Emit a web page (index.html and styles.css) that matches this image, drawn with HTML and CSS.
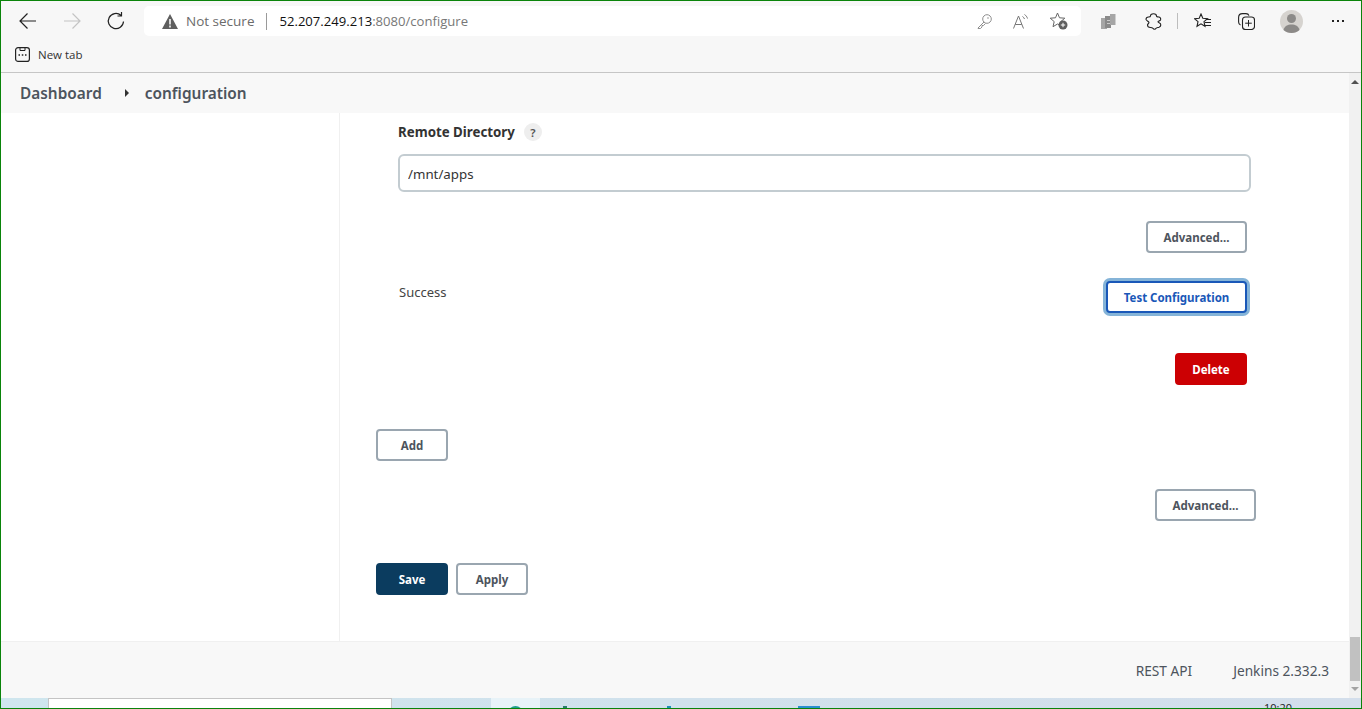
FILE: index.html
```html
<!DOCTYPE html>
<html lang="en">
<head>
    <meta charset="UTF-8">
    <title>Jenkins configuration</title>
    <link rel="stylesheet" href="styles.css">
</head>
<body>
<div class="screen">
    <div class="toolbar">
        <button class="nav-btn" type="button" aria-label="Back">
            <svg width="20" height="20" viewBox="0 0 20 20"><path d="M18 10H2M9.5 2.5L2 10l7.5 7.5" fill="none" stroke="#222" stroke-width="1.2"/></svg>
        </button>
        <button class="nav-btn" type="button" aria-label="Forward">
            <svg width="20" height="20" viewBox="0 0 20 20"><path d="M2 10h16M10.5 2.5L18 10l-7.5 7.5" fill="none" stroke="#c4c4c4" stroke-width="1.2"/></svg>
        </button>
        <button class="nav-btn" type="button" aria-label="Refresh">
            <svg width="20" height="20" viewBox="0 0 20 20"><path d="M17.5 10.5a7.6 7.6 0 1 1-2.6-6.2M15.5 1v4h-4" fill="none" stroke="#222" stroke-width="1.2"/></svg>
        </button>
        <div class="address">
            <svg width="16" height="15" viewBox="0 0 16 15"><path d="M8 0l8 15H0z" fill="#5f5f5f"/><path d="M7.2 5h1.6v5.5H7.2zM7.2 11.5h1.6v2H7.2z" fill="#f8f8f8"/></svg>
            <span class="not-secure">Not secure</span>
            <span class="address-sep"></span>
            <span class="url"><b>52.207.249.213</b>:8080/configure</span>
            <div class="address-icons">
                <svg width="15" height="15" viewBox="0 0 15 15"><circle cx="10" cy="5" r="4.3" fill="none" stroke="#8f8f8f"/><circle cx="11" cy="4" r=".8" fill="#8f8f8f"/><path d="M7 8L1 14v.5h2.5L5 13v-1.5h1.500L8.500 9.500" fill="none" stroke="#8f8f8f"/></svg>
                <svg width="16" height="15" viewBox="0 0 16 15"><path d="M.5 14.5L5.5 2l5 12.500M2.200 10.500h6.600" fill="none" stroke="#777"/><path d="M9.500 2.500c1 .6 1.700 1.500 2 2.500M11.500.5c1.400.9 2.500 2.300 3 4" fill="none" stroke="#777"/></svg>
                <svg width="18" height="18" viewBox="0 0 18 18"><path d="M7.500 1l2 4.800 5.300.4-4 3.400 1.200 5.100-4.500-2.700-4.500 2.700 1.200-5.100-4-3.400 5.300-.4z" fill="none" stroke="#666"/><circle cx="13" cy="13" r="4.500" fill="#5f5f5f"/><path d="M10.800 13h4.400M13 10.800v4.400" stroke="#fff"/></svg>
            </div>
        </div>
        <div class="tool-icons">
            <svg class="ti-copies" width="15" height="15" viewBox="0 0 15 15"><path d="M0 4h6v11H0z" fill="#a6a6a6"/><path d="M4 2h6v12H4z" fill="#8a8a8a"/><path d="M9 0h5.500v11H9z" fill="#a6a6a6"/><path d="M6 6h3v1H6zM6 9h3v1H6z" fill="#ccc"/></svg>
            <svg class="ti-puzzle" width="17" height="17" viewBox="0 0 17 17"><path d="M5.500 3c0-3 6-3 6 0 0 .5 1 1 2.500 1 1.500.5 2 1.500 1.500 3-.5 1-2.500 1-2.500 1.800s2 1 2.500 2c.5 1.500 0 3-1.500 3.500-2 .5-2.500.5-3 1-.5 1.200-2.500 1.200-3 0-.5-.5-1-.8-2.500-.8-2 0-3-1-3-2.500 0-1 1.500-1.500 1.500-2.500S1.200 7.500 1 6.500C1 5 2 4 3.500 4c1 0 2-.5 2-1z" fill="none" stroke="#222" stroke-width="1.100"/></svg>
            <span class="tool-sep"></span>
            <svg class="ti-favs" width="17" height="16" viewBox="0 0 17 16"><path d="M7 1l1.800 4.300 4.700.4-3.500 3 1 4.600L7 10.900l-4 2.400 1-4.600-3.500-3 4.700-.4z" fill="#f7f7f7" stroke="#222" stroke-width="1.100"/><path d="M12 6.500h5M11 9.500h6M11 12.500h6" stroke="#222"/></svg>
            <svg class="ti-coll" width="17" height="17" viewBox="0 0 17 17"><path d="M2.500 12C1.200 11.500.6 10.500.6 9V4.500C.6 2 2 .6 4.500.6h3.500c1.500 0 2.500.6 3 2" fill="none" stroke="#222" stroke-width="1.100"/><rect x="4.500" y="4" width="12" height="12.500" rx="3" fill="none" stroke="#222" stroke-width="1.100"/><path d="M10.500 7v6.500M7.200 10.200h6.600" stroke="#222"/></svg>
            <svg class="ti-avatar" width="23" height="23" viewBox="0 0 23 23"><circle cx="11.500" cy="11.500" r="11.500" fill="#d6d3cf"/><circle cx="11.500" cy="8.500" r="4.500" fill="#8c8a88"/><path d="M3.500 20c1-4 4-5.500 8-5.500s7 1.500 8 5.500c-2 2-5 3-8 3s-6-1-8-3z" fill="#8c8a88"/></svg>
            <span class="ti-more"><i></i><i></i><i></i></span>
        </div>
    </div>

    <div class="favbar">
        <svg width="15" height="15" viewBox="0 0 15 15"><rect x=".6" y=".6" width="13.8" height="13.8" rx="2.5" fill="none" stroke="#222" stroke-width="1.2"/><path d="M5 .6v2.900h5V.6" fill="none" stroke="#222"/><path d="M3.500 8h1.500M6.800 8h1.500M10 8h1.500" stroke="#222" stroke-width="1.5"/></svg>
        <span>New tab</span>
    </div>

    <div class="page-wrap">
        <div class="page">
            <div class="breadcrumb">
                <a class="crumb">Dashboard</a>
                <span class="crumb-arrow"></span>
                <a class="crumb">configuration</a>
            </div>

            <div class="columns">
                <div class="side-panel"></div>
                <div class="main-panel">
                    <div class="inner">
                        <div class="label-row">
                            <label class="field-label">Remote Directory</label>
                            <span class="help">?</span>
                        </div>
                        <input class="field-input" type="text" value="/mnt/apps">
                        <div class="right-row adv-row">
                            <button class="btn btn-adv" type="button">Advanced...</button>
                        </div>
                        <div class="test-row">
                            <span class="success">Success</span>
                            <button class="btn btn-focus" type="button">Test Configuration</button>
                        </div>
                        <div class="right-row del-row">
                            <button class="btn btn-danger" type="button">Delete</button>
                        </div>
                    </div>
                    <button class="btn btn-wide add-btn" type="button">Add</button>
                    <div class="right-row outer-adv">
                        <button class="btn btn-adv" type="button">Advanced...</button>
                    </div>
                    <div class="bottom-btns">
                        <button class="btn btn-wide btn-primary" type="button">Save</button>
                        <button class="btn btn-wide" type="button">Apply</button>
                    </div>
                </div>
            </div>

            <div class="footer">
                <a>REST API</a>
                <a>Jenkins 2.332.3</a>
            </div>
        </div>
        <div class="scrollbar">
            <span class="arrow-up"></span>
            <span class="thumb"></span>
            <span class="arrow-down"></span>
        </div>
    </div>

    <div class="taskbar">
        <div class="search-box"></div>
        <div class="task-active"><span class="task-dot"></span></div>
        <span class="task-bit bit-a"></span>
        <span class="task-bit bit-b"></span>
        <span class="task-bit bit-c"></span>
        <span class="clock">10:20</span>
    </div>
</div>
</body>
</html>
```

FILE: styles.css
```css
* {
    box-sizing: border-box;
}
html, body {
    margin: 0;
    height: 100%;
    overflow: hidden;
}
body {
    font-family: "Noto Sans", "Open Sans", sans-serif;
    color: #333;
    background: #fff;
}
.screen {
    display: flex;
    flex-direction: column;
    width: 1362px;
    height: 709px;
    border: 1px solid #0a840a;
    overflow: hidden;
}

/* browser chrome */
.toolbar {
    display: flex;
    align-items: center;
    height: 41px;
    padding-bottom: 1px;
    background: #f7f7f7;
}
.nav-btn {
    display: flex;
    align-items: center;
    justify-content: center;
    width: 44px;
    height: 30px;
    padding: 0;
    border: none;
    background: none;
}
.nav-btn:first-child {
    margin-left: 5px;
}
.address {
    display: flex;
    align-items: center;
    width: 937px;
    height: 30px;
    margin-left: 6px;
    padding-left: 18px;
    background: #fff;
    border-radius: 5px;
    font-family: "Open Sans", sans-serif;
    font-size: 13.5px;
}
.not-secure {
    margin-left: 8px;
    color: #6b6b6b;
}
.address-sep {
    width: 1px;
    height: 17px;
    margin: 0 12px 0 12px;
    background: #9a9a9a;
}
.url {
    font-size: 13.1px;
    color: #777;
}
.url b {
    font-weight: 400;
    color: #111;
}
.address-icons {
    display: flex;
    align-items: center;
    gap: 21px;
    margin-left: auto;
    margin-right: 13px;
}
.tool-icons {
    display: flex;
    align-items: center;
    flex: 1;
    padding-left: 20px;
}
.ti-puzzle {
    margin-left: 29px;
}
.tool-sep {
    width: 1px;
    height: 16px;
    margin-left: 15px;
    background: #bdbdbd;
}
.ti-favs {
    margin-left: 16px;
}
.ti-coll {
    margin-left: 27px;
}
.ti-avatar {
    margin-left: 25px;
}
.ti-more {
    display: flex;
    gap: 3px;
    margin-left: 29px;
}
.ti-more i {
    width: 2px;
    height: 2px;
    background: #222;
}
.favbar {
    display: flex;
    align-items: center;
    gap: 8px;
    height: 31px;
    padding: 0 0 6px 14px;
    background: #f7f7f7;
    border-bottom: 1px solid #c6c6c6;
    font-family: "Open Sans", sans-serif;
    font-size: 11.5px;
    color: #333;
}

/* jenkins page */
.page-wrap {
    display: flex;
    flex: 1;
    min-height: 0;
}
.page {
    display: flex;
    flex-direction: column;
    flex: 1;
    min-width: 0;
}
.breadcrumb {
    display: flex;
    align-items: center;
    height: 40px;
    padding-left: 19px;
    background: #f8f8f8;
}
.crumb {
    font-size: 15.4px;
    font-weight: 600;
    color: #4d545d;
}
.crumb-arrow {
    width: 0;
    height: 0;
    margin: 0 16px 0 23px;
    border-left: 4px solid #333;
    border-top: 4px solid transparent;
    border-bottom: 4px solid transparent;
}
.columns {
    display: flex;
    flex: 1;
    min-height: 0;
}
.side-panel {
    width: 339px;
    border-right: 1px solid #f0f0f0;
}
.main-panel {
    flex: 1;
    display: flex;
    flex-direction: column;
    align-items: flex-start;
    padding-left: 36px;
}
.inner {
    width: 875px;
    padding-left: 22px;
}
.label-row {
    display: flex;
    align-items: center;
    gap: 9px;
    height: 18px;
    margin-top: 10px;
}
.field-label {
    font-size: 13.3px;
    font-weight: 700;
    color: #333;
}
.help {
    display: flex;
    align-items: center;
    justify-content: center;
    width: 18px;
    height: 18px;
    border-radius: 50%;
    background: #eee;
    font-size: 11.5px;
    font-weight: 600;
    color: #555;
}
.field-input {
    display: block;
    width: 853px;
    height: 38px;
    margin-top: 13px;
    padding: 1px 8px 0;
    border: 2px solid #c3ccd1;
    border-radius: 6px;
    font-family: "Noto Sans", sans-serif;
    font-size: 13.3px;
    color: #333;
    outline: none;
}
.right-row {
    display: flex;
    justify-content: flex-end;
}
.adv-row {
    width: 849px;
    margin-top: 29px;
}
.btn {
    height: 32px;
    padding: 0 15px;
    border: 2px solid #9aa6b0;
    border-radius: 4px;
    background: #fff;
    font-family: "Noto Sans", sans-serif;
    font-size: 11.5px;
    font-weight: 700;
    color: #4d545d;
}
.btn-adv {
    width: 101px;
    padding: 0;
}
.btn-wide {
    width: 72px;
    padding: 0;
}
.test-row {
    display: flex;
    justify-content: space-between;
    width: 849px;
    margin-top: 28px;
}
.success {
    padding-left: 1px;
    font-size: 13px;
    line-height: 22px;
    color: #444;
}
.btn-focus {
    width: 141px;
    padding: 0;
    border-color: #1a58b8;
    color: #1a58b8;
    letter-spacing: -.03px;
    box-shadow: 0 0 0 3px #85b4d8;
}
.del-row {
    width: 849px;
    margin-top: 40px;
}
.btn-danger {
    width: 72px;
    padding: 0;
    border-color: #cc0003;
    background: #cc0003;
    color: #fff;
}
.add-btn {
    margin-top: 44px;
}
.outer-adv {
    width: 880px;
    margin-top: 28px;
}
.bottom-btns {
    display: flex;
    gap: 8px;
    margin-top: 42px;
}
.btn-primary {
    border-color: #0b3c5f;
    background: #0b3c5f;
    color: #fff;
}
.footer {
    display: flex;
    justify-content: flex-end;
    align-items: center;
    gap: 41px;
    height: 57px;
    padding-right: 20px;
    background: #f8f8f8;
    border-top: 1px solid #f0f0f0;
    font-size: 13.7px;
    color: #4d545d;
}

/* scrollbar */
.scrollbar {
    display: flex;
    flex-direction: column;
    align-items: center;
    width: 12px;
    background: #f1f1f1;
}
.arrow-up {
    width: 0;
    height: 0;
    margin-top: 7px;
    border-bottom: 4px solid #505050;
    border-left: 4px solid transparent;
    border-right: 4px solid transparent;
}
.thumb {
    width: 10px;
    height: 44px;
    margin-top: auto;
    background: #c1c1c1;
}
.arrow-down {
    width: 0;
    height: 0;
    margin: 6px 0 7px;
    border-top: 4px solid #a3a3a3;
    border-left: 4px solid transparent;
    border-right: 4px solid transparent;
}

/* desktop taskbar, cut off by the window */
.taskbar {
    position: relative;
    height: 10px;
    background: linear-gradient(90deg, #cfe6ee 0%, #d0e1ec 50%, #d3deeb 100%);
    overflow: hidden;
}
.search-box {
    position: absolute;
    left: 47px;
    top: 0;
    width: 344px;
    height: 12px;
    background: #fff;
    border: 1px solid #c4c4c4;
}
.task-active {
    position: absolute;
    left: 490px;
    top: 0;
    width: 49px;
    height: 10px;
    background: #e8f3f8;
}
.task-dot {
    position: absolute;
    left: 17px;
    top: 8px;
    width: 15px;
    height: 15px;
    border-radius: 50%;
    background: #1f9f8f;
}
.task-bit {
    position: absolute;
    top: 8px;
    height: 2px;
}
.bit-a {
    left: 562px;
    width: 4px;
    background: #2a7d6e;
}
.bit-b {
    left: 666px;
    width: 4px;
    background: #1f8fb8;
}
.bit-c {
    left: 797px;
    width: 22px;
    background: #2a8fd0;
}
.clock {
    position: absolute;
    left: 1263px;
    top: 3px;
    font-family: "Open Sans", sans-serif;
    font-size: 11px;
    line-height: 14px;
    color: #222;
}
```
